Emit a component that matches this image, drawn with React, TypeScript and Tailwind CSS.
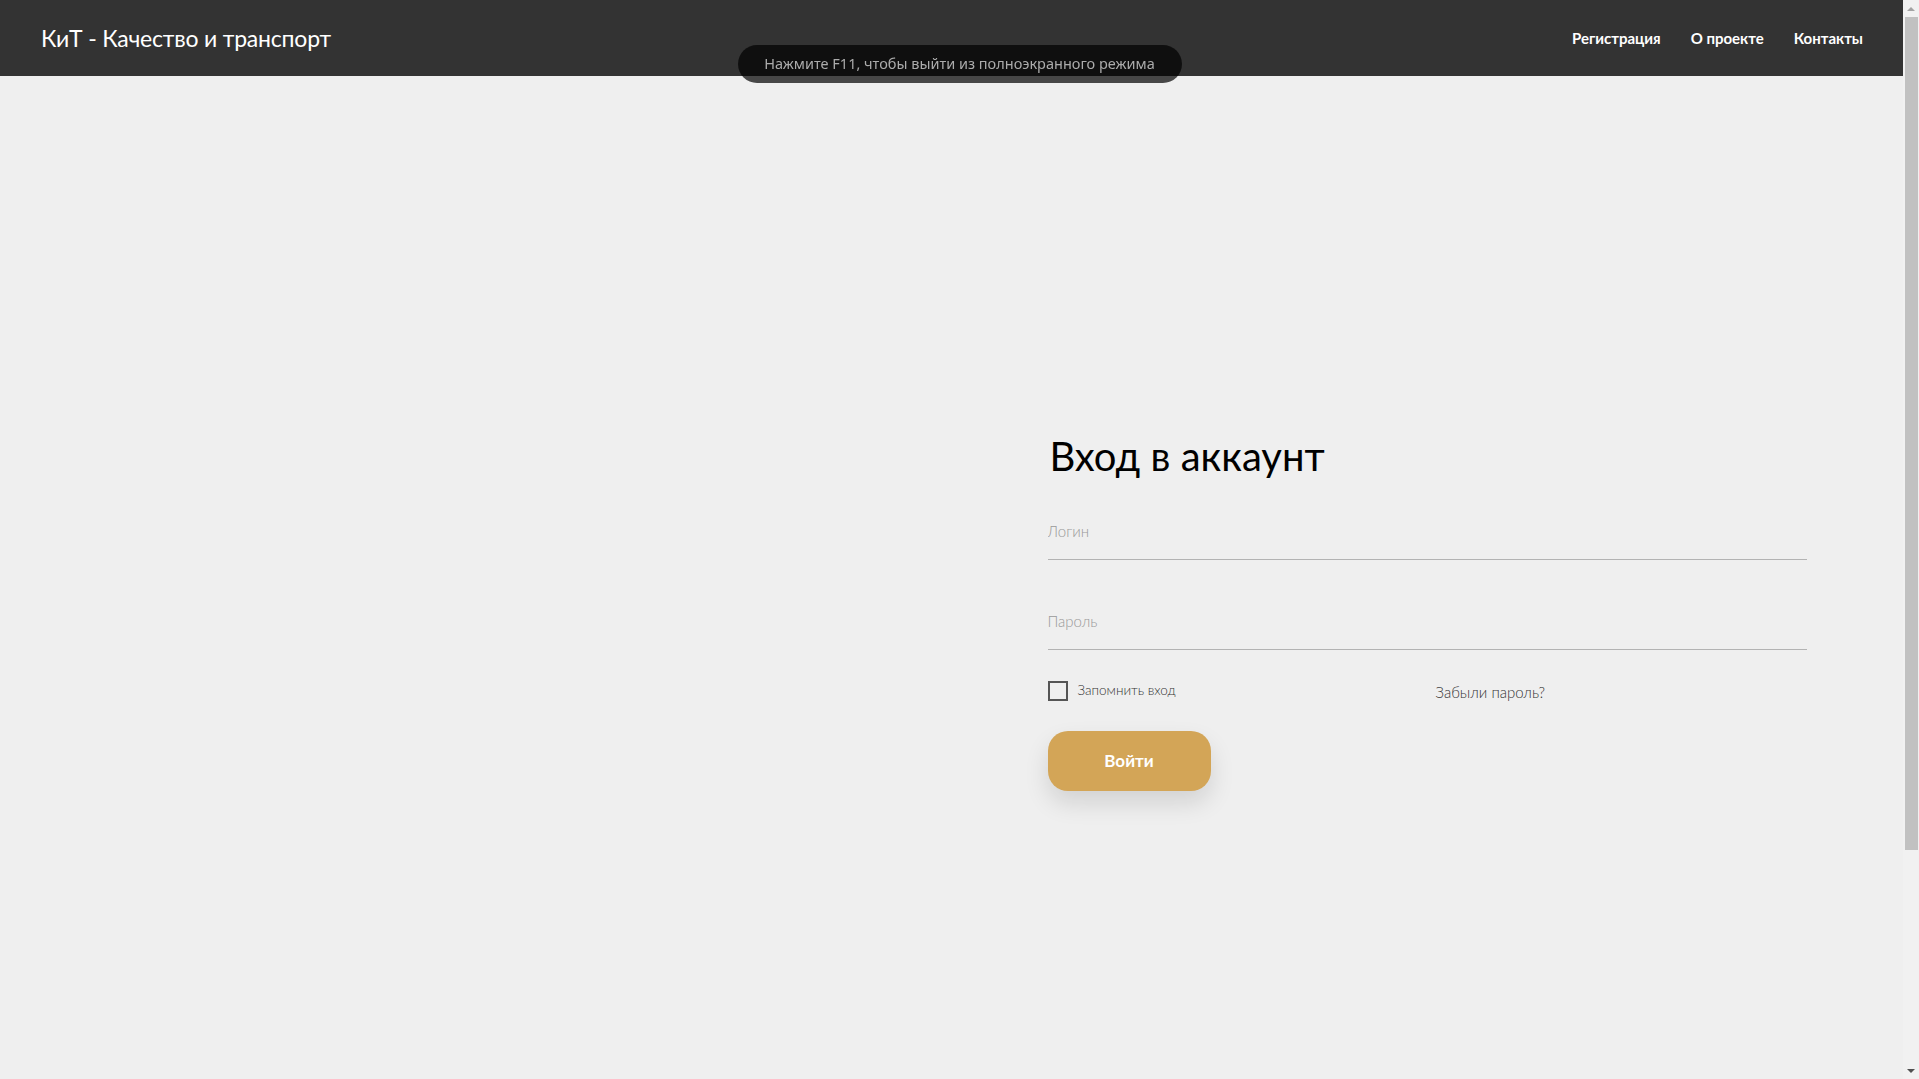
import { FC, useState } from "react";

const NavLinks = ["Регистрация", "О проекте", "Контакты"];

const LoginForm: FC = () => {
  const [remember, setRemember] = useState(false);

  return (
    <form
      className="flex flex-col"
      onSubmit={(e) => {
        e.preventDefault();
      }}
    >
      <h1 className="text-[40px] leading-[50px] text-black mb-[35px] ml-[2px]">
        Вход в аккаунт
      </h1>
      <input
        type="text"
        placeholder="Логин"
        className="h-[44px] pb-[14px] bg-transparent border-b border-[#b3b3b3] text-[15px] font-light outline-none placeholder:text-[#999]"
      />
      <input
        type="password"
        placeholder="Пароль"
        className="mt-[46px] h-[44px] pb-[14px] bg-transparent border-b border-[#b3b3b3] text-[15px] font-light outline-none placeholder:text-[#999]"
      />
      <div className="mt-[31px] flex items-center h-[20px]">
        <label className="w-[388px] flex items-center gap-[10px] cursor-pointer">
          <span
            onClick={() => setRemember(!remember)}
            className="w-[20px] h-[20px] border-2 border-[#555] bg-transparent"
          />
          <span className="text-[13.5px] font-light text-[#333] -mt-[2px]">
            Запомнить вход
          </span>
        </label>
        <a href="#" className="text-[15px] font-light text-[#333] mt-[3px]">
          Забыли пароль?
        </a>
      </div>
      <button
        type="submit"
        className="mt-[30px] w-[163px] h-[60px] rounded-[20px] bg-[#d3a557] text-white text-[17px] font-bold shadow-[0_12px_24px_rgba(0,0,0,0.12)]"
      >
        Войти
      </button>
    </form>
  );
};

const Scrollbar: FC = () => (
  <aside className="w-[16px] h-screen bg-[#f1f1f1] flex flex-col items-center shrink-0">
    <div className="h-[17px] flex items-center justify-center">
      <span className="w-0 h-0 border-x-[4px] border-x-transparent border-b-[4px] border-b-[#a3a3a3]" />
    </div>
    <div className="w-[13px] h-[833px] ml-[1px] bg-[#c1c1c1]" />
    <div className="flex-1" />
    <div className="h-[17px] flex items-center justify-center">
      <span className="w-0 h-0 border-x-[4px] border-x-transparent border-t-[4px] border-t-[#505050]" />
    </div>
  </aside>
);

export default function App() {
  return (
    <div className="h-screen flex overflow-hidden bg-[#efefef] font-['Lato','Noto_Sans',sans-serif]">
      <div className="flex-1 min-w-0 relative">
        <header className="h-[76px] bg-[#333333] flex items-center justify-between pl-[41px] pr-[40px]">
          <a href="#" className="text-[23px] text-white tracking-[-0.2px]">
            КиТ - Качество и транспорт
          </a>
          <nav className="flex gap-[30px] text-[15px] font-bold text-white">
            {NavLinks.map((l) => (
              <a key={l} href="#">
                {l}
              </a>
            ))}
          </nav>
        </header>

        <main className="grid grid-cols-2 pt-[355px]">
          <div />
          <div className="px-[96px]">
            <LoginForm />
          </div>
        </main>
      </div>

      <Scrollbar />

      <div className="fixed top-[45px] left-1/2 -translate-x-1/2 w-[444px] h-[38px] rounded-full bg-black/70 flex items-center justify-center font-['Noto_Sans','Open_Sans',sans-serif] text-[14.5px] text-[#ababab]">
        Нажмите F11, чтобы выйти из полноэкранного режима
      </div>
    </div>
  );
}
